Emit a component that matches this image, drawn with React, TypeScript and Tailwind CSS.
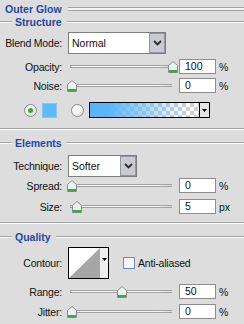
import React from 'react';

const font = { fontFamily: '"Liberation Sans", Arial, sans-serif' };

const Groove = ({ className = '' }: { className?: string }) => (
  <div className={`h-[2px] border-t border-[#a2a2a2] bg-white ${className}`} />
);

const Header = ({ title }: { title: string }) => (
  <div className="flex h-[12px] items-center">
    <Groove className="w-[12px] shrink-0" />
    <span className="ml-[3px] mr-[5px] shrink-0 whitespace-nowrap text-[10.5px] font-bold leading-[12px] text-[#1d48aa]">
      {title}
    </span>
    <Groove className="flex-1" />
  </div>
);

const Label = ({ children }: { children: React.ReactNode }) => (
  <div className="w-[62px] shrink-0 whitespace-nowrap text-right text-[10.5px] leading-[12px] tracking-[-0.2px] text-[#111]">
    {children}
  </div>
);

const Thumb = ({ left }: { left: number }) => (
  <svg className="absolute top-[2px]" style={{ left }} width="10" height="12" viewBox="0 0 10 12">
    <path d="M0.5 4.5 L5 0.5 L9.5 4.5 V11.5 H0.5 Z" fill="#eef2ee" stroke="#8a8f8a" />
    <rect x="1" y="9" width="8" height="2.5" fill="#3ea54c" />
  </svg>
);

const Field = ({ value }: { value: string }) => (
  <div className="ml-[2px] h-[15px] w-[37px] shrink-0 border border-[#8d8d8d] bg-white pl-[5px] text-[10.5px] leading-[13px] text-[#111]">
    {value}
  </div>
);

const SliderRow = ({
  label,
  thumb,
  value,
  unit,
  className = '',
}: {
  label: string;
  thumb: number;
  value: string;
  unit: string;
  className?: string;
}) => (
  <div className={`flex h-[15px] items-center ${className}`}>
    <Label>{label}</Label>
    <div className="relative ml-[5px] flex h-[15px] w-[110px] shrink-0 items-center">
      <div className="ml-[3px] h-[3px] w-[102px] rounded-l-full border border-r-0 border-[#a0a0a0] bg-[linear-gradient(to_right,#f8f8f8_85%,#dddddd)]" />
      <Thumb left={thumb} />
    </div>
    <Field value={value} />
    <span className="ml-[3px] text-[10.5px] leading-[12px] text-[#111]">{unit}</span>
  </div>
);

const Chevron = () => (
  <svg width="9" height="6" viewBox="0 0 9 6">
    <polyline points="1,1 4.5,4.5 8,1" fill="none" stroke="#2b2b2b" strokeWidth="1.8" />
  </svg>
);

const Select = ({ value, width }: { value: string; width: string }) => (
  <div className={`ml-[6px] flex h-[22px] ${width} shrink-0 border border-[#7d7d7d] bg-white`}>
    <span className="flex-1 pl-[3px] text-[10.5px] leading-[20px] text-[#111]">{value}</span>
    <div className="flex w-[16px] items-center justify-center border border-[#94949c] bg-[#cacad2]">
      <Chevron />
    </div>
  </div>
);

const DownTri = () => (
  <svg width="5" height="3" viewBox="0 0 5 3">
    <polygon points="0,0 5,0 2.5,3" fill="#000" />
  </svg>
);

const Radio = ({ checked }: { checked?: boolean }) => (
  <div className="flex h-[13px] w-[13px] items-center justify-center rounded-full border border-[#8c8c8c] bg-[radial-gradient(circle_at_40%_35%,#ffffff,#e4e4e4)]">
    {checked && <div className="h-[5px] w-[5px] rounded-full bg-[#3aa83a]" />}
  </div>
);

export default function App() {
  return (
    <div className="h-[324px] w-[244px] overflow-hidden bg-[#dddddd]" style={font}>
      {/* title */}
      <div className="mt-[2px] flex h-[13px] items-center pl-[5px]">
        <span className="w-[63px] shrink-0 whitespace-nowrap text-[10.5px] font-bold leading-[12px] text-[#1d48aa]">
          Outer Glow
        </span>
        <div className="h-[4px] flex-1 border-y border-[#a2a2a2] bg-[#f2f2f2]" />
      </div>

      {/* structure */}
      <div className="mt-[1px]">
        <Header title="Structure" />
      </div>
      <div className="mt-[4px] flex h-[22px] items-center">
        <Label>Blend Mode:</Label>
        <Select value="Normal" width="w-[98px]" />
      </div>
      <SliderRow className="mt-[5px]" label="Opacity:" thumb={101} value="100" unit="%" />
      <SliderRow className="mt-[4px]" label="Noise:" thumb={0} value="0" unit="%" />

      <div className="mt-[9px] flex h-[16px] items-center pl-[24px]">
        <Radio checked />
        <div className="ml-[5px] h-[15px] w-[15px] border border-[#86c6f2] bg-[#5bbcfc]" />
        <div className="ml-[14px]">
          <Radio />
        </div>
        <div className="ml-[5px] flex h-[16px] w-[121px] border border-black">
          <div className="flex-1 bg-[linear-gradient(to_right,#56b6f8_15%,rgba(86,182,248,0)_90%),repeating-conic-gradient(#cfcfcf_0_25%,#ffffff_0_50%)] bg-[length:100%_100%,8px_8px]" />
          <div className="flex w-[10px] items-center justify-center border-l border-black bg-[#e4e4e4]">
            <DownTri />
          </div>
        </div>
      </div>

      <Groove className="mt-[10px]" />

      {/* elements */}
      <div className="mt-[7px]">
        <Header title="Elements" />
      </div>
      <div className="mt-[6px] flex h-[22px] items-center">
        <Label>Technique:</Label>
        <Select value="Softer" width="w-[69px]" />
      </div>
      <SliderRow className="mt-[1px]" label="Spread:" thumb={0} value="0" unit="%" />
      <SliderRow className="mt-[6px]" label="Size:" thumb={5} value="5" unit="px" />

      <Groove className="mt-[8px]" />

      {/* quality */}
      <div className="mt-[7px]">
        <Header title="Quality" />
      </div>
      <div className="mt-[4px] flex h-[32px] items-center">
        <Label>Contour:</Label>
        <div className="ml-[6px] flex h-[32px] w-[41px] shrink-0 border border-black">
          <svg width="31" height="30" viewBox="0 0 31 30" className="bg-white">
            <polygon points="0,30 31,0 31,30" fill="#a6a6a6" />
          </svg>
          <div className="flex w-[8px] justify-center bg-[#eeeeee] pt-[10px]">
            <DownTri />
          </div>
        </div>
        <div className="ml-[14px] h-[12px] w-[12px] shrink-0 border border-[#6f8db4] bg-[linear-gradient(135deg,#eef0f4,#ffffff)]" />
        <span className="ml-[3px] whitespace-nowrap text-[10.5px] leading-[12px] tracking-[-0.2px] text-[#111]">
          Anti-aliased
        </span>
      </div>
      <SliderRow className="mt-[5px]" label="Range:" thumb={50} value="50" unit="%" />
      <SliderRow className="mt-[5px]" label="Jitter:" thumb={0} value="0" unit="%" />
    </div>
  );
}
